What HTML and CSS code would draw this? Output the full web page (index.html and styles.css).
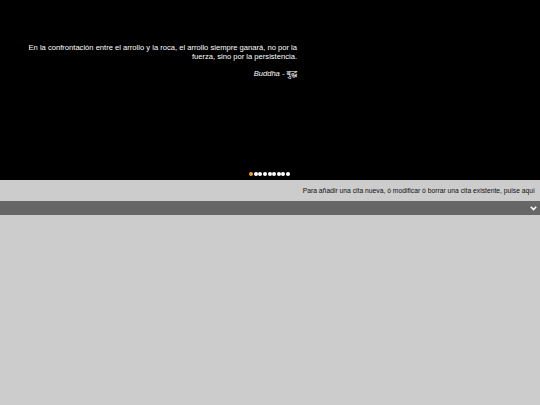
FILE: index.html
```html
<!DOCTYPE html>
<html>
<head>
<meta charset="utf-8">
<link rel="stylesheet" href="styles.css">
</head>
<body>
<div class="stage">
  <div class="quote">
    <p class="text">En la confrontación entre el arrollo y la roca, el arrollo siempre ganará, no por la fuerza, sino por la persistencia.</p>
    <p class="author">Buddha - बुद्ध</p>
  </div>
  <div class="dots">
    <span class="dot active"></span><span class="dot"></span><span class="dot"></span><span class="dot"></span><span class="dot"></span><span class="dot"></span><span class="dot"></span><span class="dot"></span><span class="dot"></span>
  </div>
</div>
<div class="info">Para añadir una cita nueva, ó modificar ó borrar una cita existente, pulse aquí</div>
<div class="toggle">
  <svg class="chev" width="7" height="5" viewBox="0 0 7 5"><path d="M0.8 0.8 L3.5 3.5 L6.2 0.8" fill="none" stroke="#fff" stroke-width="1.6"/></svg>
</div>
</body>
</html>
```
FILE: styles.css
```css
html, body {
  margin: 0;
  padding: 0;
  background: #cccccc;
  font-family: "Liberation Sans", Arial, "Noto Sans", sans-serif;
}
.stage {
  height: 180px;
  background: #000;
  display: flex;
  flex-direction: column;
  justify-content: space-between;
}
.quote {
  width: 277px;
  margin-left: 20px;
  padding-top: 43px;
  text-align: right;
  color: #fff;
  font-size: 7.6px;
}
.text {
  margin: 0;
  line-height: 9px;
}
.author {
  margin: 8px 0 0;
  font-style: italic;
  line-height: 9px;
}
.dots {
  display: flex;
  justify-content: center;
  gap: 0.6px;
  padding-right: 1px;
  padding-bottom: 4px;
}
.dot {
  width: 4px;
  height: 4px;
  border-radius: 50%;
  background: #fff;
}
.dot.active {
  background: #f0a030;
}
.info {
  height: 21px;
  line-height: 21px;
  text-align: right;
  padding-right: 5px;
  font-size: 6.75px;
  color: #111;
  background: #cccccc;
}
.toggle {
  height: 14px;
  background: #666666;
  display: flex;
  justify-content: flex-end;
  align-items: center;
  padding-right: 3px;
}
```
